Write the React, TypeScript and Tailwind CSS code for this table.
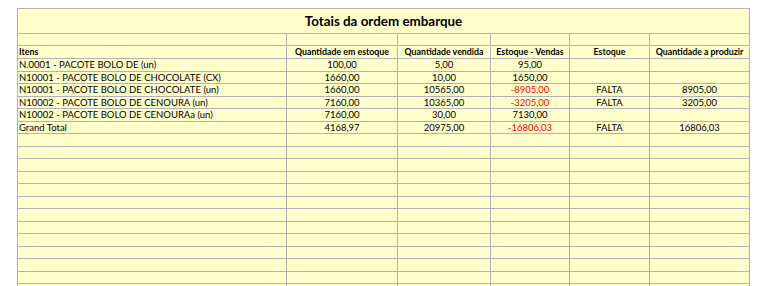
import React from 'react';

type Row = {
    item: string;
    estoque: string;
    vendida: string;
    diff: string;
    negativo?: boolean;
    status: string;
    produzir: string;
};

const rows: Row[] = [
    { item: 'N.0001 - PACOTE BOLO DE (un)', estoque: '100,00', vendida: '5,00', diff: '95,00', status: '', produzir: '' },
    { item: 'N10001 - PACOTE BOLO DE CHOCOLATE (CX)', estoque: '1660,00', vendida: '10,00', diff: '1650,00', status: '', produzir: '' },
    { item: 'N10001 - PACOTE BOLO DE CHOCOLATE (un)', estoque: '1660,00', vendida: '10565,00', diff: '-8905,00', negativo: true, status: 'FALTA', produzir: '8905,00' },
    { item: 'N10002 - PACOTE BOLO DE CENOURA (un)', estoque: '7160,00', vendida: '10365,00', diff: '-3205,00', negativo: true, status: 'FALTA', produzir: '3205,00' },
    { item: 'N10002 - PACOTE BOLO DE CENOURAa (un)', estoque: '7160,00', vendida: '30,00', diff: '7130,00', status: '', produzir: '' },
    { item: 'Grand Total', estoque: '4168,97', vendida: '20975,00', diff: '-16806,03', negativo: true, status: 'FALTA', produzir: '16806,03' },
];

const cols = 'grid grid-cols-[269px_111px_93px_79px_80px_100px]';
const cell = 'border-r border-b border-[#b2b2b2] flex items-center justify-center whitespace-nowrap overflow-hidden leading-none';

const App: React.FC = () => {
    return (
        <div className="w-[759px] h-[286px] bg-white overflow-hidden pt-[8px] pl-[17px] [font-family:Lato,'Liberation_Sans',sans-serif] text-black">
            <div className="w-[733px] border-l border-t border-[#b2b2b2] bg-[#ffffcc]">
                {/* Titulo */}
                <div className="h-[25px] border-r border-b border-[#b2b2b2] flex items-center justify-center font-bold text-[13.4px] pt-[1px]">
                    Totais da ordem embarque
                </div>
                <div className={`${cols} h-[12px]`}>
                    {[0, 1, 2, 3, 4, 5].map((i) => <div key={i} className={cell} />)}
                </div>

                {/* Cabeçalho */}
                <div className={`${cols} h-[13px] text-[8.8px] font-bold pt-[1px]`}>
                    <div className={`${cell} !justify-start pl-[1px]`}>Itens</div>
                    <div className={cell}>Quantidade em estoque</div>
                    <div className={cell}>Quantidade vendida</div>
                    <div className={cell}>Estoque - Vendas</div>
                    <div className={cell}>Estoque</div>
                    <div className={cell}>Quantidade a produzir</div>
                </div>

                {rows.map((r) => (
                    <div key={r.item} className={`${cols} h-[12.5px] text-[9.5px]`}>
                        <div className={`${cell} !justify-start pl-[1px]`}>{r.item}</div>
                        <div className={cell}>{r.estoque}</div>
                        <div className={cell}>{r.vendida}</div>
                        <div className={`${cell} ${r.negativo ? 'text-[#ff0000]' : ''}`}>{r.diff}</div>
                        <div className={cell}>{r.status}</div>
                        <div className={cell}>{r.produzir}</div>
                    </div>
                ))}

                {/* Linhas vazias */}
                {Array.from({ length: 13 }).map((_, n) => (
                    <div key={n} className={`${cols} h-[12.5px]`}>
                        {[0, 1, 2, 3, 4, 5].map((i) => <div key={i} className={cell} />)}
                    </div>
                ))}
            </div>
        </div>
    );
};

export default App;
